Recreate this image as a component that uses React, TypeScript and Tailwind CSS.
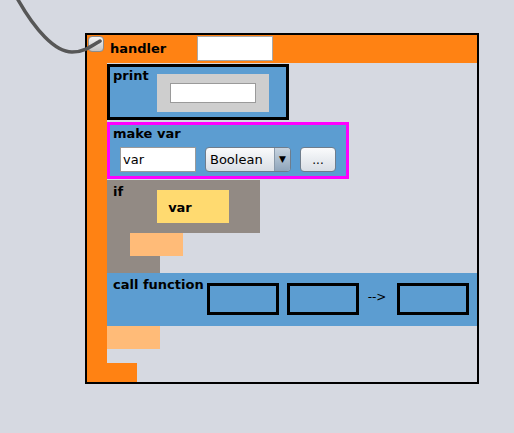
import React from 'react';

const font = { fontFamily: '"DejaVu Sans", "Liberation Sans", sans-serif' };

function HandleIcon() {
  return (
    <div className="ml-[1px] h-[16px] w-[16px] rounded-[4px] border border-[#8c8c8c] bg-gradient-to-b from-[#f6f6f6] to-[#c4c4c4]" />
  );
}

function ComboBox() {
  return (
    <div className="flex h-[25px] w-[86px] overflow-hidden rounded-[4px] border border-[#6f7d8c] bg-gradient-to-b from-[#fafbfc] to-[#d9dee5]">
      <div className="flex flex-1 items-center pl-[4px] text-[13px] text-black">Boolean</div>
      <div className="flex w-[16px] items-center justify-center border-l border-[#8a9aab] bg-gradient-to-b from-[#c8d4e0] to-[#8fa5bb] text-[9px] text-black">
        ▼
      </div>
    </div>
  );
}

function SlotBox() {
  return <div className="h-[32px] w-[72px] border-[3px] border-black" />;
}

export default function App() {
  return (
    <div className="relative h-[433px] w-[514px] overflow-hidden bg-[#d6d9e1] pl-[85px] pt-[33px]" style={font}>
      {/* outer handler frame */}
      <div className="flex h-[351px] w-[394px] flex-col border-2 border-black">
        {/* header */}
        <div className="flex h-[28px] items-start bg-[#ff8213] pt-[1px]">
          <HandleIcon />
          <span className="ml-[6px] mt-[5px] text-[13px] font-bold leading-[16px] text-black">handler</span>
          <div className="ml-[31px] h-[25px] w-[76px] border border-[#a9a9a9] bg-white" />
        </div>

        {/* body */}
        <div className="flex h-[300px]">
          <div className="w-[20px] bg-[#ff8213]" />
          <div className="flex flex-1 flex-col">
            {/* print */}
            <div className="mt-px flex h-[56px] w-[182px] border-[3px] border-black bg-[#5c9dd1] pl-[3px]">
              <span className="mt-[1px] text-[13px] font-bold leading-[16px] text-black">print</span>
              <div className="ml-[8px] mt-[7px] flex h-[38px] w-[112px] items-center justify-center bg-[#cecece]">
                <div className="h-[20px] w-[86px] border border-[#9a9a9a] bg-white" />
              </div>
            </div>

            {/* make var */}
            <div className="mt-[2px] flex h-[57px] w-[242px] flex-col border-[3px] border-[#ff00ff] bg-[#5c9dd1] pl-[3px]">
              <span className="mt-[1px] text-[13px] font-bold leading-[16px] text-black">make var</span>
              <div className="ml-[7px] mt-[5px] flex items-center">
                <div className="flex h-[25px] w-[76px] items-center border border-[#9a9a9a] bg-white pl-[2px] text-[13px] text-black">
                  var
                </div>
                <div className="ml-[9px]">
                  <ComboBox />
                </div>
                <div className="ml-[9px] flex h-[25px] w-[36px] items-center justify-center rounded-[4px] border border-[#6f7d8c] bg-gradient-to-b from-[#fafbfc] to-[#d9dee5] text-[12px] text-black">
                  ...
                </div>
              </div>
            </div>

            {/* if */}
            <div className="mt-px flex h-[53px] w-[153px] bg-[#928a84] pl-[6px]">
              <span className="mt-[4px] text-[13px] font-bold leading-[16px] text-black">if</span>
              <div className="ml-[34px] mt-[10px] flex h-[33px] w-[72px] items-center bg-[#ffda70] pl-[11px] pt-[2px] text-[13px] font-bold text-black">
                var
              </div>
            </div>
            <div className="flex h-[23px]">
              <div className="w-[23px] bg-[#928a84]" />
              <div className="w-[53px] bg-[#ffbb78]" />
            </div>
            <div className="h-[17px] w-[53px] bg-[#928a84]" />

            {/* call function */}
            <div className="flex h-[53px] bg-[#5c9dd1] pl-[6px]">
              <span className="mt-[4px] whitespace-nowrap text-[13px] font-bold leading-[16px] text-black">call function</span>
              <div className="ml-[3px] mt-[10px] flex items-start">
                <SlotBox />
                <div className="ml-[8px]">
                  <SlotBox />
                </div>
                <span className="ml-[9px] mt-[7px] text-[12px] leading-[14px] text-black">--&gt;</span>
                <div className="ml-[11px]">
                  <SlotBox />
                </div>
              </div>
            </div>
            <div className="h-[23px] w-[53px] bg-[#ffbb78]" />
          </div>
        </div>

        {/* foot */}
        <div className="h-[19px] w-[50px] bg-[#ff8213]" />
      </div>

      {/* connection wire */}
      <svg className="pointer-events-none absolute left-0 top-0" width="120" height="70" viewBox="0 0 120 70">
        <path
          d="M17 -2 C 35 30, 55 52, 72 52 C 84 52, 92 46, 100 41"
          fill="none"
          stroke="#575757"
          strokeWidth="3.5"
          strokeLinecap="round"
        />
      </svg>
    </div>
  );
}
